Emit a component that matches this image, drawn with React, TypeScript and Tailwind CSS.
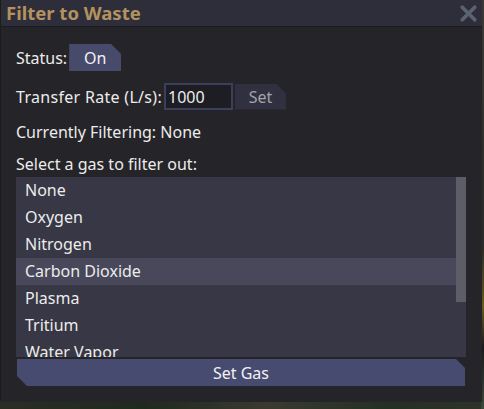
import { X } from "lucide-react";

const gases = [
  "None",
  "Oxygen",
  "Nitrogen",
  "Carbon Dioxide",
  "Plasma",
  "Tritium",
  "Water Vapor",
];

const font = { fontFamily: '"Noto Sans", sans-serif' };

export default function App() {
  const selected = "Carbon Dioxide";

  return (
    <div
      className="relative h-[409px] w-[484px] overflow-hidden bg-[#1c1d1a]"
      style={font}
    >
      {/* game world peeking out behind the window */}
      <div className="absolute bottom-0 left-0 h-[8px] w-full bg-[linear-gradient(90deg,#2a2d25,#1f2a1f_30%,#3a3a30_55%,#243024_80%,#2e3328)]" />
      <div className="absolute right-0 top-0 h-full w-[3px] bg-[linear-gradient(180deg,#3b3a33,#2a2a26_60%,#6b5a1a_75%,#1a1a1a_85%,#3c4a3a)]" />

      <div className="absolute left-[1px] top-0 flex h-[402px] w-[481px] flex-col bg-[#252428]">
        <div className="flex h-[27px] items-center justify-between border-b border-[#1b1b1f] bg-[#2e2e3b] pl-[5px] pr-[1px]">
          <span className="text-[18.5px] font-bold leading-none text-[#b3925f]">
            Filter to Waste
          </span>
          <X className="h-[25px] w-[25px] text-[#5b6271]" strokeWidth={3.6} />
        </div>

        <div className="flex flex-col px-[15px] text-[16px] text-[#ececec]">
          <div className="mt-[17px] flex h-[27px] items-center">
            <span>Status:</span>
            <button className="ml-[2px] h-[27px] w-[52px] bg-[#484a6c] text-center text-[#f2f2f2] [clip-path:polygon(0_0,calc(100%-10px)_0,100%_10px,100%_100%,0_100%)]">
              On
            </button>
          </div>

          <div className="mt-[12px] flex h-[27px] items-center">
            <span className="tracking-[0.3px]">Transfer Rate (L/s):</span>
            <div className="ml-[2px] flex h-[27px] w-[69px] items-center border-2 border-[#3b3f5c] bg-[#1d1d23] pl-[2px]">
              1000
            </div>
            <button className="ml-[2px] h-[26px] w-[51px] bg-[#303040] text-center text-[#a3a3ab] [clip-path:polygon(0_0,calc(100%-10px)_0,100%_10px,100%_100%,0_100%)]">
              Set
            </button>
          </div>

          <div className="mt-[9px] h-[27px] leading-[27px]">
            Currently Filtering: None
          </div>

          <div className="mt-[5px] h-[26px] leading-[26px]">
            Select a gas to filter out:
          </div>

          <div className="relative h-[180px] w-[450px] overflow-hidden bg-[#373745]">
            {gases.map((g) => (
              <div
                key={g}
                className={[
                  "h-[27px] pl-[9px] leading-[27px]",
                  g === selected ? "bg-[#48485a]" : "",
                ].join(" ")}
              >
                {g}
              </div>
            ))}
            <div className="absolute right-0 top-0 h-[125px] w-[10px] bg-[#5d5d68]" />
          </div>

          <button className="mt-[2px] ml-[1px] h-[27px] w-[448px] bg-[#484b70] text-center text-[#f2f2f2] [clip-path:polygon(0_0,calc(100%-9px)_0,100%_9px,100%_100%,10px_100%,0_calc(100%-10px))]">
            Set Gas
          </button>
        </div>
      </div>
    </div>
  );
}
